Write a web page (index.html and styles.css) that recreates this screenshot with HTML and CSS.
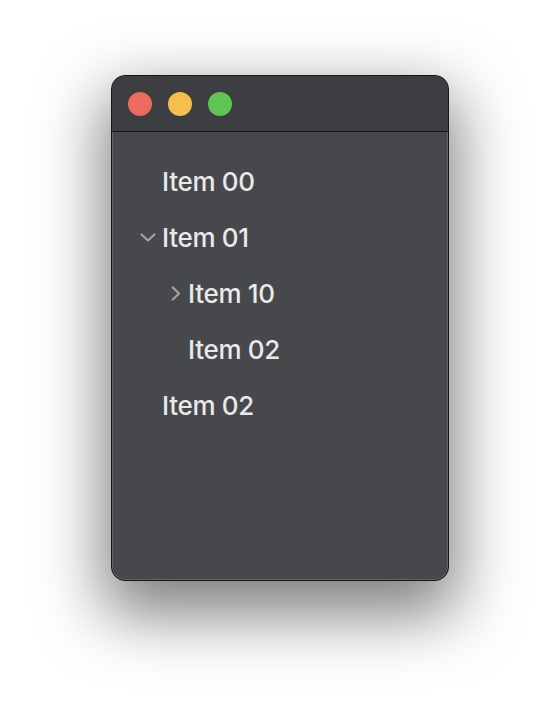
FILE: index.html
```html
<!DOCTYPE html>
<html>
<head>
<meta charset="utf-8">
<link rel="stylesheet" href="styles.css">
</head>
<body>
<div class="stage">
  <div class="window">
    <div class="titlebar">
      <span class="light red"></span>
      <span class="light yellow"></span>
      <span class="light green"></span>
    </div>
    <div class="tree">
      <div class="row lvl0"><span class="chev"></span><span class="label">Item 00</span></div>
      <div class="row lvl0"><span class="chev"><svg width="16" height="9" viewBox="0 0 16 9"><path d="M1.5 1.5 L8 7.5 L14.5 1.5" fill="none" stroke="#a3a3a5" stroke-width="2.2" stroke-linecap="round" stroke-linejoin="round"/></svg></span><span class="label">Item 01</span></div>
      <div class="row lvl1"><span class="chev"><svg width="10" height="15" viewBox="0 0 10 15"><path d="M1.8 1.5 L8 7.5 L1.8 13.5" fill="none" stroke="#a3a3a5" stroke-width="2.2" stroke-linecap="round" stroke-linejoin="round"/></svg></span><span class="label">Item 10</span></div>
      <div class="row lvl1"><span class="chev"></span><span class="label">Item 02</span></div>
      <div class="row lvl0"><span class="chev"></span><span class="label">Item 02</span></div>
    </div>
  </div>
</div>
</body>
</html>
```
FILE: styles.css
```css
html, body {
  margin: 0;
  padding: 0;
  background: #ffffff;
}
.stage {
  width: 560px;
  height: 728px;
  display: flex;
  justify-content: center;
  padding-top: 75px;
  box-sizing: border-box;
}
.window {
  width: 338px;
  height: 506px;
  box-sizing: border-box;
  border: 1px solid #161618;
  border-radius: 14px;
  background: #47484b;
  overflow: hidden;
  box-shadow: inset 0 0 0 1px rgba(255,255,255,0.16), 0 26px 64px 8px rgba(0,0,0,0.5);
  display: flex;
  flex-direction: column;
}
.titlebar {
  height: 56px;
  box-sizing: border-box;
  background: #3d3e42;
  border-bottom: 1px solid #151517;
  display: flex;
  align-items: center;
  gap: 16px;
  padding-left: 16px;
  padding-top: 1px;
}
.light {
  width: 24px;
  height: 24px;
  border-radius: 50%;
  display: block;
}
.red { background: #ec6a5e; }
.yellow { background: #f4bf4f; }
.green { background: #61c554; }
.tree {
  padding: 22px 0 0 26px;
  display: flex;
  flex-direction: column;
}
.row {
  height: 56px;
  display: flex;
  align-items: center;
  font-family: Inter, "Noto Sans", sans-serif;
  font-size: 26px;
  font-weight: 500;
  color: #e9e9ea;
  line-height: 56px;
  letter-spacing: -0.3px;
}
.lvl1 { padding-left: 26px; }
.chev {
  width: 24px;
  height: 56px;
  display: flex;
  align-items: center;
  justify-content: center;
  flex: none;
}
.lvl0 .chev svg { margin-left: -4px; margin-top: -2px; }
.lvl1 .chev svg { margin-left: 0; margin-top: -2px; }
.label { display: block; }
```
